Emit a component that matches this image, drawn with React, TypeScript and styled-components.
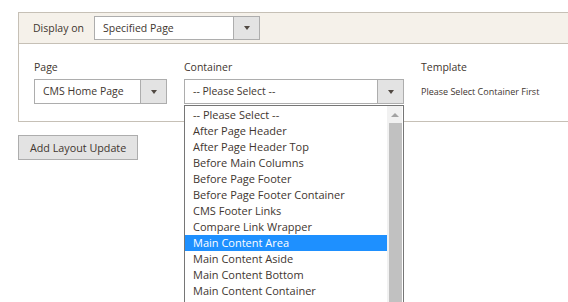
import React from "react";
import styled, { createGlobalStyle } from "styled-components";

const GlobalStyle = createGlobalStyle`
  html, body {
    margin: 0;
    padding: 0;
    background: #ffffff;
  }
  body {
    font-family: "Open Sans", "Liberation Sans", sans-serif;
    color: #41362f;
  }
`;

const Page = styled.div`
  box-sizing: border-box;
  height: 100vh;
  overflow: hidden;
  padding: 12px 0 0 18px;
`;

const Panel = styled.div`
  width: 600px;
  border: 1px solid #c6c0b6;
  background: #fff;
`;

const PanelHead = styled.div`
  display: flex;
  align-items: center;
  height: 30px;
  padding-left: 14px;
  background: #f5f1ea;
  border-bottom: 1px solid #c6c0b6;
`;

const HeadLabel = styled.span`
  font-size: 10.5px;
  width: 61px;
`;

const PanelBody = styled.div`
  display: flex;
  gap: 17px;
  padding: 15px 15px 17px 15px;
`;

const Field = styled.div<{ $width: number }>`
  position: relative;
  width: ${(p) => p.$width}px;
  display: flex;
  flex-direction: column;
  gap: 3px;
`;

const FieldLabel = styled.label`
  font-size: 10.5px;
  line-height: 17px;
  color: #41362f;
`;

const Note = styled.div`
  font-size: 9px;
  line-height: 25px;
  color: #41362f;
`;

const SelectBox = styled.div<{ $width: number; $height: number }>`
  display: flex;
  width: ${(p) => p.$width}px;
  height: ${(p) => p.$height}px;
  box-sizing: border-box;
  border: 1px solid #adadad;
  background: #fff;
`;

const SelectValue = styled.span`
  flex: 1;
  font-size: 10.5px;
  line-height: 22px;
  padding-left: 8px;
  white-space: nowrap;
`;

const SelectButton = styled.span`
  width: 25px;
  display: flex;
  align-items: center;
  justify-content: center;
  background: #e3e3e3;
  border-left: 1px solid #adadad;
  &::after {
    content: "";
    border-left: 3.5px solid transparent;
    border-right: 3.5px solid transparent;
    border-top: 4px solid #514943;
  }
`;

const List = styled.ul`
  position: absolute;
  left: 0;
  top: 46px;
  width: 220px;
  height: 220px;
  margin: 0;
  padding: 1px 0 0 0;
  list-style: none;
  box-sizing: border-box;
  border: 1px solid #767676;
  border-bottom: none;
  background: #fff;
  overflow: hidden;
  z-index: 5;
`;

const Option = styled.li<{ $active?: boolean }>`
  height: 16px;
  line-height: 16px;
  font-size: 11px;
  padding-left: 8px;
  margin-right: 16px;
  white-space: nowrap;
  background: ${(p) => (p.$active ? "#1e90ff" : "transparent")};
  color: ${(p) => (p.$active ? "#ffffff" : "#41362f")};
`;

const Scrollbar = styled.div`
  position: absolute;
  top: 0;
  right: 1px;
  bottom: 0;
  width: 15px;
  background: #f1f1f1;
  display: flex;
  flex-direction: column;
  align-items: center;
`;

const ScrollArrow = styled.div`
  height: 17px;
  display: flex;
  align-items: center;
  &::after {
    content: "";
    border-left: 4px solid transparent;
    border-right: 4px solid transparent;
    border-bottom: 4px solid #a3a3a3;
  }
`;

const Thumb = styled.div`
  width: 13px;
  margin-left: 2px;
  flex: 1;
  background: #c1c1c1;
`;

const Button = styled.button`
  display: block;
  margin-top: 13px;
  height: 25px;
  padding: 0 11px;
  font-family: "Open Sans", "Liberation Sans", sans-serif;
  font-size: 10.75px;
  color: #41362f;
  background: #e3e3e3;
  border: 1px solid #adadad;
  border-radius: 0;
`;

const options = [
  "-- Please Select --",
  "After Page Header",
  "After Page Header Top",
  "Before Main Columns",
  "Before Page Footer",
  "Before Page Footer Container",
  "CMS Footer Links",
  "Compare Link Wrapper",
  "Main Content Area",
  "Main Content Aside",
  "Main Content Bottom",
  "Main Content Container",
];

function Select({
  width,
  height = 25,
  value,
}: {
  width: number;
  height?: number;
  value: string;
}) {
  return (
    <SelectBox $width={width} $height={height}>
      <SelectValue>{value}</SelectValue>
      <SelectButton />
    </SelectBox>
  );
}

export default function App() {
  return (
    <>
      <GlobalStyle />
      <Page>
        <Panel>
          <PanelHead>
            <HeadLabel>Display on</HeadLabel>
            <Select width={166} height={24} value="Specified Page" />
          </PanelHead>
          <PanelBody>
            <Field $width={133}>
              <FieldLabel>Page</FieldLabel>
              <Select width={133} value="CMS Home Page" />
            </Field>
            <Field $width={220}>
              <FieldLabel>Container</FieldLabel>
              <Select width={220} value="-- Please Select --" />
              <List>
                {options.map((o) => (
                  <Option key={o} $active={o === "Main Content Area"}>
                    {o}
                  </Option>
                ))}
                <Scrollbar>
                  <ScrollArrow />
                  <Thumb />
                </Scrollbar>
              </List>
            </Field>
            <Field $width={150}>
              <FieldLabel>Template</FieldLabel>
              <Note>Please Select Container First</Note>
            </Field>
          </PanelBody>
        </Panel>
        <Button>Add Layout Update</Button>
      </Page>
    </>
  );
}
